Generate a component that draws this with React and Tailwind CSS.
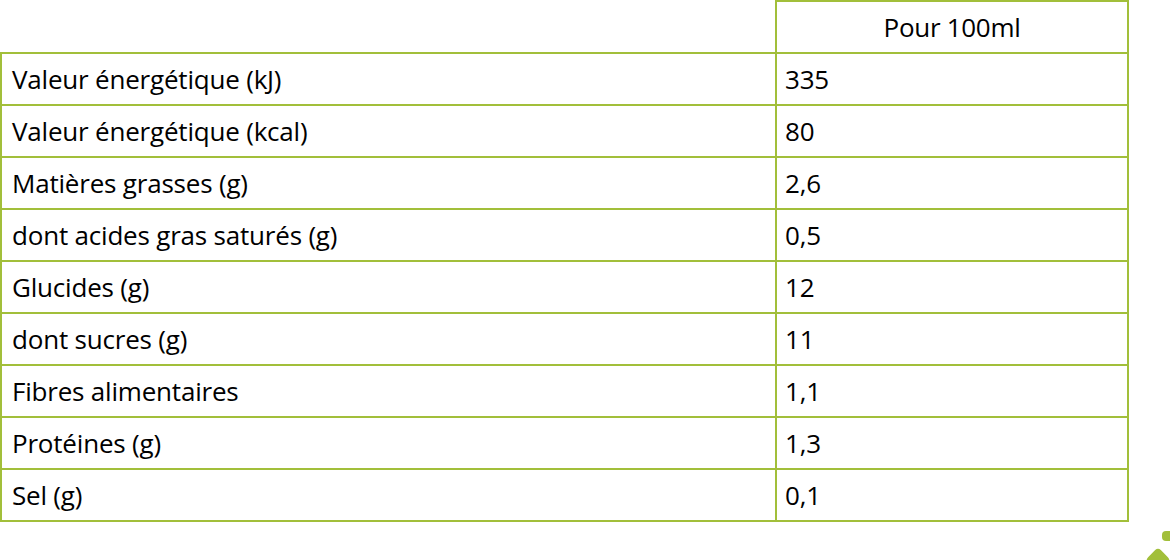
import React from 'react';

const rows = [
    ['Valeur énergétique (kJ)', '335'],
    ['Valeur énergétique (kcal)', '80'],
    ['Matières grasses (g)', '2,6'],
    ['dont acides gras saturés (g)', '0,5'],
    ['Glucides (g)', '12'],
    ['dont sucres (g)', '11'],
    ['Fibres alimentaires', '1,1'],
    ['Protéines (g)', '1,3'],
    ['Sel (g)', '0,1'],
];

const App = () => {
    return (
        <div
            className="relative w-[1170px] h-[560px] overflow-hidden bg-white text-[26px] text-black"
            style={{ fontFamily: '"Open Sans", "Noto Sans", sans-serif' }}
        >
            {/* header */}
            <div className="flex w-[1129px]">
                <div className="w-[775px] h-[52px]" />
                <div className="flex-1 h-[52px] border-t-2 border-l-2 border-r-2 border-[#a2bf3a] flex items-center justify-center tracking-[-0.3px]">
                    Pour 100ml
                </div>
            </div>

            {/* body */}
            <div className="w-[1129px] border-l-2 border-r-2 border-b-2 border-[#a2bf3a] tracking-[-0.2px]">
                {rows.map(([label, value]) => (
                    <div key={label} className="flex h-[52px] border-t-2 border-[#a2bf3a]">
                        <div className="w-[773px] flex items-center pl-[10px]">{label}</div>
                        <div className="flex-1 flex items-center pl-[8px] border-l-2 border-[#a2bf3a]">{value}</div>
                    </div>
                ))}
            </div>

            {/* leaf decoration, bottom right */}
            <div className="absolute left-[1162px] top-[531px] w-[12px] h-[10px] rounded-[4px] bg-[#a2bf3a]" />
            <div className="absolute left-[1149px] top-[551px] w-[18px] h-[18px] rotate-45 rounded-[4px] bg-[#a2bf3a]" />
        </div>
    );
};

export default App;
